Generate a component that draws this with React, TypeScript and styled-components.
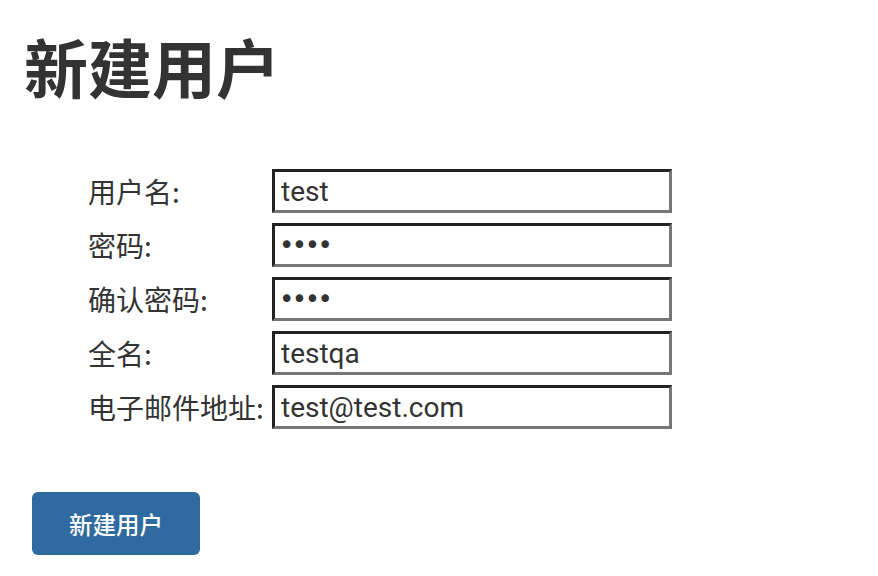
import styled, { createGlobalStyle } from "styled-components";

const GlobalStyle = createGlobalStyle`
  body {
    margin: 0;
    background: #fff;
    font-family: "Noto Sans", "Noto Sans CJK SC", sans-serif;
    color: #333;
  }
`;

const Page = styled.div`
  padding: 22px 0 0 24px;
`;

const Title = styled.h1`
  margin: 0;
  font-size: 64px;
  line-height: 86px;
  font-weight: 700;
  font-family: "Noto Sans CJK SC", sans-serif;
  color: #333;
`;

const Form = styled.div`
  display: grid;
  grid-template-columns: 184px 400px;
  row-gap: 10px;
  margin: 61px 0 0 64px;
  align-items: center;
`;

const Label = styled.label`
  font-size: 28px;
  line-height: 44px;
  font-family: "Noto Sans CJK SC", sans-serif;
  color: #333;
  white-space: nowrap;
`;

const Input = styled.input<{ $masked?: boolean }>`
  box-sizing: border-box;
  width: 400px;
  height: 44px;
  border-style: solid;
  border-width: 3px;
  border-color: #222 #767676 #767676 #222;
  padding: 0 6px 0 ${(p) => (p.$masked ? "4px" : "6px")};
  font-size: ${(p) => (p.$masked ? "26px" : "28px")};
  letter-spacing: ${(p) => (p.$masked ? "-2.5px" : "0")};
  font-family: ${(p) =>
    p.$masked ? '"DejaVu Sans", sans-serif' : '"Roboto", "Noto Sans", sans-serif'};
  color: #333;
  background: #fff;
  outline: none;
`;

const SubmitButton = styled.button`
  margin: 63px 0 0 8px;
  width: 168px;
  height: 63px;
  border: none;
  border-radius: 6px;
  background: #2f6aa1;
  color: #fff;
  font-size: 23.5px;
  font-weight: 500;
  font-family: "Noto Sans CJK SC", sans-serif;
`;

const fields = [
  { label: "用户名:", type: "text", value: "test" },
  { label: "密码:", type: "password", value: "test" },
  { label: "确认密码:", type: "password", value: "test" },
  { label: "全名:", type: "text", value: "testqa" },
  { label: "电子邮件地址:", type: "text", value: "test@test.com" },
];

export default function App() {
  return (
    <Page>
      <GlobalStyle />
      <Title>新建用户</Title>
      <Form>
        {fields.map((f) => [
          <Label key={f.label + "-label"}>{f.label}</Label>,
          <Input
            key={f.label + "-input"}
            type={f.type}
            defaultValue={f.value}
            $masked={f.type === "password"}
          />,
        ])}
      </Form>
      <SubmitButton>新建用户</SubmitButton>
    </Page>
  );
}
